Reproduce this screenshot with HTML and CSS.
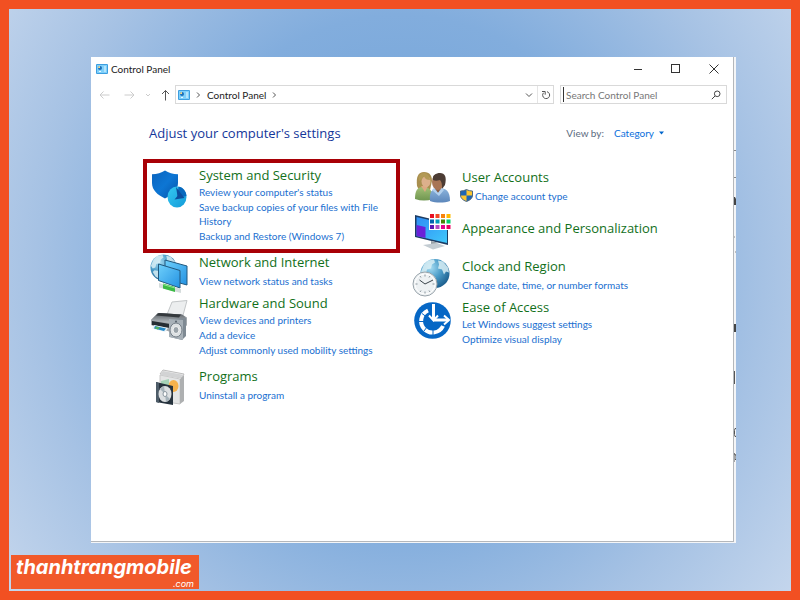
FILE: index.html
```html
<!DOCTYPE html>
<html lang="en">
<head>
    <meta charset="UTF-8">
    <meta name="viewport" content="width=device-width, initial-scale=1.0">
    <title>Control Panel</title>
    <link rel="stylesheet" href="styles.css">
</head>
<body>
    <!-- shared symbols -->
    <svg class="symbols" width="0" height="0" aria-hidden="true">
        <symbol id="panel-icon" viewBox="0 0 12 10">
            <rect width="12" height="10" rx="1" fill="#3c9ee0"/>
            <rect x="1" y="1" width="10" height="8" fill="#7fd0fa"/>
            <circle cx="4" cy="4" r="2" fill="#1d6fb8"/>
            <path d="M4 4V2a2 2 0 0 0-2 2z" fill="#f4d68a"/>
            <path d="M8 3h2M8 5h2M3 7.500h2M8 7h2" stroke="#e9f8ff" stroke-width="1"/>
        </symbol>
        <symbol id="globe" viewBox="0 0 30 30">
            <defs>
                <radialGradient id="sea" cx="35%" cy="30%" r="75%">
                    <stop offset="0" stop-color="#a6dcf2"/>
                    <stop offset="0.500" stop-color="#4b9cc8"/>
                    <stop offset="1" stop-color="#1b5d8c"/>
                </radialGradient>
            </defs>
            <circle cx="15" cy="15" r="14.500" fill="url(#sea)"/>
            <path d="M4 6l4-4 6-1 1 3-3 2-1 4-4 1-1 4-3 1-2-3zM18 2l5 1 5 6 1 5-3-1-2 3-2-5-4-1 1-4zM5 18l5 1 3 4-2 5-5-3-3-5z" fill="#d9eef5" opacity="0.850"/>
        </symbol>
    </svg>

    <div class="stage">
        <div class="screen">
            <div class="window">
                <header class="titlebar">
                    <svg class="app-icon" width="12" height="10"><use href="#panel-icon"/></svg>
                    <span class="window-title">Control Panel</span>
                    <div class="window-buttons">
                        <button aria-label="Minimize"><svg width="10" height="10" viewBox="0 0 10 10"><path d="M1 5.500h8"/></svg></button>
                        <button aria-label="Maximize"><svg width="10" height="10" viewBox="0 0 10 10"><rect x="0.500" y="0.500" width="8" height="8"/></svg></button>
                        <button aria-label="Close"><svg width="10" height="10" viewBox="0 0 10 10"><path d="M0.500 0.500l9 9M9.500 0.500l-9 9"/></svg></button>
                    </div>
                </header>

                <nav class="toolbar">
                    <div class="nav-buttons">
                        <button aria-label="Back"><svg width="11" height="10" viewBox="0 0 11 10"><path d="M10.500 5H1M4.500 1.500L1 5l3.500 3.500"/></svg></button>
                        <button aria-label="Forward"><svg width="11" height="10" viewBox="0 0 11 10"><path d="M0.500 5H10M6.500 1.500L10 5 6.500 8.500"/></svg></button>
                        <button aria-label="Recent locations"><svg width="6" height="10" viewBox="0 0 6 10"><path d="M1 4l2 2 2-2"/></svg></button>
                        <button class="up" aria-label="Up"><svg width="9" height="12" viewBox="0 0 9 12"><path d="M4.500 11.500V1.500M1 5l3.500-3.500L8 5"/></svg></button>
                    </div>
                    <div class="address">
                        <svg width="12" height="10"><use href="#panel-icon"/></svg>
                        <svg class="chevron" width="5" height="8" viewBox="0 0 5 8"><path d="M1 1.500L3.500 4 1 6.500"/></svg>
                        <a class="crumb" href="#">Control Panel</a>
                        <svg class="chevron" width="5" height="8" viewBox="0 0 5 8"><path d="M1 1.500L3.500 4 1 6.500"/></svg>
                        <button class="history" aria-label="Previous locations"><svg width="8" height="6" viewBox="0 0 8 6"><path d="M1 1.500l3 3 3-3"/></svg></button>
                        <button class="refresh" aria-label="Refresh"><svg width="10" height="10" viewBox="0 0 10 10"><path d="M6 1.700A3.500 3.500 0 1 1 2.500 2.800M1 1.500h3.200v3.200"/></svg></button>
                    </div>
                    <div class="search">
                        <span class="caret"></span>
                        <input type="text" placeholder="Search Control Panel" aria-label="Search Control Panel">
                        <button aria-label="Search"><svg width="10" height="10" viewBox="0 0 10 10"><circle cx="6.200" cy="3.800" r="2.800"/><path d="M4 6L0.800 9.200"/></svg></button>
                    </div>
                </nav>

                <main class="content">
                    <div class="heading">
                        <h1>Adjust your computer's settings</h1>
                        <div class="view-by">
                            <label for="view">View by:</label>
                            <select id="view">
                                <option>Category</option>
                            </select>
                            <svg width="5" height="4" viewBox="0 0 5 4"><path d="M0 0.500h5L2.500 3.500z" fill="#0066cc"/></svg>
                        </div>
                    </div>

                    <div class="columns">
                        <div class="column column-left">
                            <section class="category highlighted">
                                <svg class="icon" viewBox="0 0 40 40">
                                    <defs>
                                        <linearGradient id="shield" x1="0" y1="0" x2="1" y2="1">
                                            <stop offset="0" stop-color="#0a64bd"/>
                                            <stop offset="0.500" stop-color="#0d76d4"/>
                                            <stop offset="1" stop-color="#0654aa"/>
                                        </linearGradient>
                                        <linearGradient id="pie" x1="0" y1="0" x2="1" y2="1">
                                            <stop offset="0" stop-color="#35c9f2"/>
                                            <stop offset="1" stop-color="#129ad8"/>
                                        </linearGradient>
                                    </defs>
                                    <path d="M16 3.500c3.500 2.500 8 3.500 13 3.700V16c0 7-5.500 12-13 15.500C8.500 28 3 23 3 16V7.200c5-.2 9.500-1.200 13-3.700z" fill="url(#shield)"/>
                                    <ellipse cx="28" cy="30" rx="9.500" ry="10.500" fill="url(#pie)"/>
                                    <path d="M28.500 29l1-9.400c4.500.8 7.500 4.500 8 9.400l-9 2z" fill="#0868bd"/>
                                    <path d="M27 20l1.500 9-3 3.500 10-1.500z" fill="#0c4e9e"/>
                                </svg>
                                <div class="category-text">
                                    <h2><a href="#">System and Security</a></h2>
                                    <ul>
                                        <li><a href="#">Review your computer's status</a></li>
                                        <li><a href="#">Save backup copies of your files with File History</a></li>
                                        <li><a href="#">Backup and Restore (Windows 7)</a></li>
                                    </ul>
                                </div>
                            </section>

                            <section class="category single">
                                <svg class="icon" viewBox="0 0 40 40">
                                    <defs>
                                        <linearGradient id="monitor" x1="0" y1="0" x2="1" y2="1">
                                            <stop offset="0" stop-color="#6fd0fb"/>
                                            <stop offset="1" stop-color="#2492e2"/>
                                        </linearGradient>
                                    </defs>
                                    <use href="#globe" x="1" y="-1" width="27" height="29"/>
                                    <path d="M16 6l22 6v19l-22-6z" fill="url(#monitor)" stroke="#22597f"/>
                                    <path d="M9.500 10l21.500 6.500V34L9.500 26.500z" fill="url(#monitor)" stroke="#22597f"/>
                                    <path d="M10 29l22 6v4l-22-5.500z" fill="#d5dcdc"/>
                                    <path d="M14 29.500l12 3.500v5l-12-3.500z" fill="#3cba46"/>
                                    <path d="M14 30.500l12 3.500" stroke="#8de88e"/>
                                </svg>
                                <div class="category-text">
                                    <h2><a href="#">Network and Internet</a></h2>
                                    <ul>
                                        <li><a href="#">View network status and tasks</a></li>
                                    </ul>
                                </div>
                            </section>

                            <section class="category">
                                <svg class="icon" viewBox="0 0 40 40">
                                    <defs>
                                        <linearGradient id="metal" x1="0" y1="0" x2="0" y2="1">
                                            <stop offset="0" stop-color="#555b60"/>
                                            <stop offset="1" stop-color="#b9bfc4"/>
                                        </linearGradient>
                                    </defs>
                                    <path d="M23 7l15-1.500L33 24l-16-2z" fill="#eceeef" stroke="#c3c6c8"/>
                                    <path d="M9 18l24 1.500 5 3v8l-18 6L2 30v-5z" fill="#a3a8ac"/>
                                    <path d="M9 18l24 1.500 4 3L22 28 2 25z" fill="url(#metal)"/>
                                    <path d="M10 18l22 1.500-2 3-23-2z" fill="#34393d"/>
                                    <path d="M3 26l18 3v4L3 30z" fill="#262d33"/>
                                    <path d="M5 30l14 3-3 4-13-3.500z" fill="#e7f2f8"/>
                                    <path d="M6 31l11 2.500-2 2.500-10-2.500z" fill="#2587c5"/>
                                    <path d="M7 31.500l4 1-2 2-3-1z" fill="#56b35c"/>
                                    <path d="M21 24l16-1v18l-4 4-12-3z" fill="#7f8a93"/>
                                    <path d="M20 24l14 1v20l-14-3z" fill="#a8b1b8"/>
                                    <ellipse cx="27" cy="35" rx="6" ry="7" fill="#dde1e3" stroke="#737d86"/>
                                    <ellipse cx="27" cy="35" rx="3" ry="3.500" fill="#9ba4aa" stroke="#f4f4f4"/>
                                    <circle cx="27" cy="26.500" r="1" fill="#56616b"/>
                                </svg>
                                <div class="category-text">
                                    <h2><a href="#">Hardware and Sound</a></h2>
                                    <ul>
                                        <li><a href="#">View devices and printers</a></li>
                                        <li><a href="#">Add a device</a></li>
                                        <li><a href="#">Adjust commonly used mobility settings</a></li>
                                    </ul>
                                </div>
                            </section>

                            <section class="category single spaced">
                                <svg class="icon" viewBox="0 0 40 40">
                                    <path d="M11 6l3-4 21 4-2 4z" fill="#f1f1f1" stroke="#bdbdbd"/>
                                    <path d="M11 7l20 4v25l-20-3z" fill="#e4e5e5" stroke="#c8c8c8"/>
                                    <path d="M31 11l4-4v26l-4 3z" fill="#aeb0b1"/>
                                    <path d="M11 7l3-4 21 4-4 3z" fill="#d2d3d4"/>
                                    <path d="M12 13l8-2v14h-8z" fill="#a5d2b7"/>
                                    <ellipse cx="24.500" cy="18" rx="5" ry="6" fill="#f6b24d"/>
                                    <path d="M7 14l17 4v19L7 34z" fill="#27333e"/>
                                    <path d="M7 14l3 1v20l-3-1z" fill="#4d5c68"/>
                                    <ellipse cx="16" cy="26" rx="6.500" ry="8" fill="#dcdfe1"/>
                                    <path d="M16 26l-5-5 4-3zM16 26l5 5-4 3z" fill="#a7b4bb"/>
                                    <ellipse cx="16" cy="26" rx="2" ry="2.500" fill="#fff" stroke="#8b969e"/>
                                </svg>
                                <div class="category-text">
                                    <h2><a href="#">Programs</a></h2>
                                    <ul>
                                        <li><a href="#">Uninstall a program</a></li>
                                    </ul>
                                </div>
                            </section>
                        </div>

                        <div class="column column-right">
                            <section class="category single">
                                <svg class="icon" viewBox="0 0 40 40">
                                    <defs>
                                        <linearGradient id="green" x1="0" y1="0" x2="0" y2="1">
                                            <stop offset="0" stop-color="#a4c076"/>
                                            <stop offset="1" stop-color="#6f9650"/>
                                        </linearGradient>
                                        <linearGradient id="blue" x1="0" y1="0" x2="0" y2="1">
                                            <stop offset="0" stop-color="#8db5dd"/>
                                            <stop offset="1" stop-color="#5c87bb"/>
                                        </linearGradient>
                                    </defs>
                                    <path d="M5 17C4 8 6 3 12 3s8 4 8 9l-2 9H7z" fill="#a98f4f"/>
                                    <path d="M3 30c0-8 2-12 8-12s10 3 10 12c-6 2-12 2-18 0z" fill="url(#green)"/>
                                    <path d="M9 17h7l-3 6z" fill="#dca982"/>
                                    <ellipse cx="14" cy="12.500" rx="4.500" ry="5.500" fill="#dcb08c"/>
                                    <path d="M7 12c2-1 4-3 5-5 1 3 3 4 6 4-1-5-3-7-6-7-4 0-6 3-5 8z" fill="#b39a56"/>
                                    <path d="M18 32c-1-9 2-13 9-13s11 3 11 13c-6 2-14 2-20 0z" fill="url(#blue)"/>
                                    <path d="M22 18h8l-4 6z" fill="#8b5d43"/>
                                    <ellipse cx="26" cy="13" rx="6" ry="8" fill="#a87555"/>
                                    <path d="M21 11c-1-5 3-7 7-7 5 0 7 4 5 12l-3 4c0-4 0-7-2-9-3 1-5 1-7 0z" fill="#4c3c34"/>
                                    <path d="M22 19l4 5 4-5 2 2-5 6-7-6z" fill="#b2d0ed"/>
                                </svg>
                                <div class="category-text">
                                    <h2><a href="#">User Accounts</a></h2>
                                    <ul>
                                        <li class="with-shield">
                                            <svg width="13" height="13" viewBox="0 0 13 13">
                                                <path d="M6.500 0.500c2 1 4 1.500 6 1.500v4c0 3-2 5-6 6.500C2.500 11 .5 9 .5 6V2c2 0 4-.5 6-1.500z" fill="#fcc62f"/>
                                                <path d="M6.500 .5V6.500H.5V2c2 0 4-.5 6-1.500zM6.500 6.500h6c0 2.500-2 4.500-6 6z" fill="#1d65b5"/>
                                                <path d="M6.500 0.500c2 1 4 1.500 6 1.500v4c0 3-2 5-6 6.500C2.500 11 .5 9 .5 6V2c2 0 4-.5 6-1.500z" fill="none" stroke="#4c6784"/>
                                            </svg>
                                            <a href="#">Change account type</a>
                                        </li>
                                    </ul>
                                </div>
                            </section>

                            <section class="category title-only">
                                <svg class="icon" viewBox="0 0 40 40">
                                    <defs>
                                        <linearGradient id="display" x1="0" y1="0" x2="1" y2="1">
                                            <stop offset="0" stop-color="#2f8df5"/>
                                            <stop offset="1" stop-color="#40c8fa"/>
                                        </linearGradient>
                                    </defs>
                                    <path d="M3 5l33 8v22L3 27z" fill="#1c3c63"/>
                                    <path d="M4.500 7L35 14v19L4.500 26z" fill="url(#display)"/>
                                    <path d="M4.500 15l9 2v11l-9-2z" fill="#6b21d8"/>
                                    <path d="M19 31l6 1.500v3l-6-1z" fill="#99a2a8"/>
                                    <path d="M11 35l14-2 8 3-12 3.500z" fill="#c3ccd2"/>
                                    <rect x="17" y="3" width="23" height="17" fill="#fff"/>
                                    <path d="M18 4h4v4h-4z" fill="#e81123"/><path d="M23.500 4h4v4h-4z" fill="#f14a26"/><path d="M29 4h4v4h-4z" fill="#f7830b"/><path d="M34.500 4h4v4h-4z" fill="#ffb900"/>
                                    <path d="M18 9.500h4v4h-4z" fill="#0063b1"/><path d="M23.500 9.500h4v4h-4z" fill="#0099bc"/><path d="M29 9.500h4v4h-4z" fill="#498205"/><path d="M34.500 9.500h4v4h-4z" fill="#00cc6a"/>
                                    <path d="M18 15h4v4h-4z" fill="#5c16b4"/><path d="M23.500 15h4v4h-4z" fill="#b14ac0"/><path d="M29 15h4v4h-4z" fill="#e3008c"/><path d="M34.500 15h4v4h-4z" fill="#ea005e"/>
                                </svg>
                                <div class="category-text">
                                    <h2><a href="#">Appearance and Personalization</a></h2>
                                </div>
                            </section>

                            <section class="category single">
                                <svg class="icon" viewBox="0 0 40 40">
                                    <use href="#globe" x="8" y="0" width="30" height="31"/>
                                    <circle cx="13" cy="26" r="12" fill="#edf1f3" stroke="#98a3aa"/>
                                    <circle cx="13" cy="26" r="10" fill="none" stroke="#fff"/>
                                    <path d="M13 16.500v2M13 33.500v2M3.500 26h2M20.500 26h2M8 18l1 1.500M18 18l-1 1.500M8 34l1-1.500M18 34l-1-1.500" stroke="#8b969d"/>
                                    <path d="M7.500 22L13 26l8-4" stroke="#39434a" fill="none"/>
                                </svg>
                                <div class="category-text">
                                    <h2><a href="#">Clock and Region</a></h2>
                                    <ul>
                                        <li><a href="#">Change date, time, or number formats</a></li>
                                    </ul>
                                </div>
                            </section>

                            <section class="category">
                                <svg class="icon" viewBox="0 0 40 40">
                                    <circle cx="20.500" cy="21.500" r="18.300" fill="#0667c5"/>
                                    <path d="M16 11.500A11.500 11.500 0 1 0 31 27" fill="none" stroke="#fff" stroke-width="4"/>
                                    <path d="M10 14.500l4 3M7 22.500h5M12 32l3-4M21 36v-6" stroke="#0667c5" stroke-width="1"/>
                                    <path d="M21.500 5v15M21.500 21h15" stroke="#fff" stroke-width="3" fill="none"/>
                                    <path d="M17 16.500l4.500 5 4.500-5" fill="none" stroke="#fff" stroke-width="2"/>
                                    <path d="M32 16.500l5 4.500-5 4.500" fill="none" stroke="#fff" stroke-width="2"/>
                                </svg>
                                <div class="category-text">
                                    <h2><a href="#">Ease of Access</a></h2>
                                    <ul>
                                        <li><a href="#">Let Windows suggest settings</a></li>
                                        <li><a href="#">Optimize visual display</a></li>
                                    </ul>
                                </div>
                            </section>
                        </div>
                    </div>
                </main>
            </div>

            <!-- sliver of the document behind the window -->
            <svg class="behind" width="2" viewBox="0 0 2 485" preserveAspectRatio="xMinYMin meet" aria-hidden="true">
                <path d="M0 93.500h2M0 120.500h2M0 180h1M1 195h1" stroke="#888"/>
                <path d="M0 140h1l1 2v6H0zM0 267h2v8H0z" fill="#444"/>
                <path d="M0.500 314v13M2 371.500H1l-.5 2v4l.5 2h1M0 396v9M0 397h1l1 2v3l-1 1" stroke="#555" fill="none"/>
            </svg>
        </div>

        <footer class="brand">
            <span class="brand-name">thanhtrangmobile</span>
            <span class="brand-domain">.com</span>
        </footer>
    </div>
</body>
</html>
```
FILE: styles.css
```css
* {
    box-sizing: border-box;
}
body {
    margin: 0;
    font-family: Lato, "Open Sans", sans-serif;
    font-size: 10px;
    color: #222;
}
h1, h2, ul {
    margin: 0;
    padding: 0;
    font-weight: normal;
    list-style: none;
}
a {
    color: #1a6fd0;
    text-decoration: none;
}
a:hover {
    text-decoration: underline;
}
button {
    display: flex;
    align-items: center;
    justify-content: center;
    padding: 0;
    border: none;
    background: none;
}
svg {
    display: block;
    flex-shrink: 0;
}
.symbols {
    position: absolute;
}

/* Orange frame with the blue backdrop */
.stage {
    display: flex;
    flex-direction: column;
    min-height: 100vh;
    padding: 48px 0 2px 2px;
    border: 9px solid #f25022;
    background: radial-gradient(ellipse 75% 110% at 50% 45%, #6a9fd6 0%, #82addd 40%, #a6c2e4 62%, #c6d7ed 85%);
}
.screen {
    flex: 1;
    display: flex;
    margin: 0 55px 0 80px;
    background: #f4f5f7;
    padding-bottom: 1px;
}
.window {
    flex: 1;
    min-width: 0;
    background: #fff;
    border-right: 1px solid #b4b7bb;
    border-bottom: 1px solid #b4b7bb;
}
.behind {
    height: 485px;
}

/* Title bar */
.titlebar {
    display: flex;
    align-items: center;
    height: 23px;
    padding-left: 5px;
}
.window-title {
    margin-left: 3px;
}
.window-buttons {
    display: flex;
    margin-left: auto;
}
.window-buttons button {
    width: 38px;
    height: 23px;
}
.window-buttons svg {
    fill: none;
    stroke: #333;
}

/* Navigation row */
.toolbar {
    display: flex;
    align-items: center;
    margin-top: 5px;
    padding: 0 6px 0 8px;
}
.nav-buttons {
    display: flex;
    width: 76px;
    gap: 10px;
}
.nav-buttons button:nth-child(2) {
    margin-left: 4px;
}
.nav-buttons svg {
    fill: none;
    stroke: #ccc;
}
.nav-buttons .up svg {
    stroke: #555;
}
.address {
    flex: 1;
    display: flex;
    align-items: center;
    height: 19px;
    padding-left: 2px;
    border: 1px solid #d9d9d9;
}
.chevron {
    margin: 0 6px;
}
.chevron, .address button svg {
    fill: none;
    stroke: #555;
}
.crumb {
    color: #222;
}
.history {
    margin-left: auto;
    width: 16px;
    height: 17px;
}
.refresh {
    width: 16px;
    height: 17px;
    border-left: 1px solid #e5e5e5;
}
.search {
    display: flex;
    align-items: center;
    width: 167px;
    height: 19px;
    margin-left: 6px;
    padding: 0 5px 0 2px;
    border: 1px solid #d9d9d9;
}
.caret {
    width: 1px;
    height: 15px;
    background: #333;
}
.search input {
    flex: 1;
    min-width: 0;
    padding: 0 0 0 2px;
    border: none;
    outline: none;
    font: inherit;
}
.search input::placeholder {
    color: #777;
}
.search button svg {
    fill: none;
    stroke: #444;
}

/* Main area */
.content {
    padding: 19px 64px 20px 52px;
}
.heading {
    display: flex;
    align-items: center;
    justify-content: space-between;
    height: 20px;
    padding: 0 5px 0 6px;
}
h1, h2 {
    font-family: "Open Sans", "Noto Sans", sans-serif;
    font-size: 13px;
}
h1 {
    color: #15379a;
}
.view-by {
    display: flex;
    align-items: center;
    color: #5c6b80;
}
.view-by select {
    margin: 0 4px 0 10px;
    padding: 0;
    border: none;
    background: none;
    appearance: none;
    font: inherit;
    color: #0b6fdc;
}
.columns {
    display: grid;
    grid-template-columns: 1fr 1fr;
    gap: 12px;
    margin-top: 16px;
}
.column {
    display: flex;
    flex-direction: column;
    gap: 1px;
}
.column-right {
    padding-top: 10px;
}
.category {
    display: flex;
    gap: 10px;
}
.column-left .category {
    padding-left: 6px;
}
.column-left .highlighted {
    padding: 4px 6px 6px 2px;
    border: 4px solid #a80006;
}
.spaced {
    margin-top: 10px;
}
.icon {
    width: 40px;
    height: 40px;
    overflow: visible;
}
.category h2 {
    line-height: 17px;
}
.category h2 a {
    color: #12701a;
}
.category ul {
    display: flex;
    flex-direction: column;
    gap: 1px;
    margin-top: 1px;
    line-height: 14px;
}
.single ul {
    margin-top: 3px;
}
.title-only {
    min-height: 47px;
}
.title-only .category-text {
    padding-top: 10px;
}
.with-shield {
    display: flex;
    gap: 2px;
    margin-left: -2px;
}

/* Logo */
.brand {
    align-self: flex-start;
    display: flex;
    flex-direction: column;
    width: 188px;
    height: 34px;
    margin-top: 12px;
    padding: 1px 5px;
    background: #f1592a;
    color: #fff;
    font-family: Inter, sans-serif;
    font-style: italic;
}
.brand-name {
    font-size: 20px;
    font-weight: bold;
    line-height: 23px;
}
.brand-domain {
    align-self: flex-end;
    font-size: 9px;
    line-height: 9px;
}
```
